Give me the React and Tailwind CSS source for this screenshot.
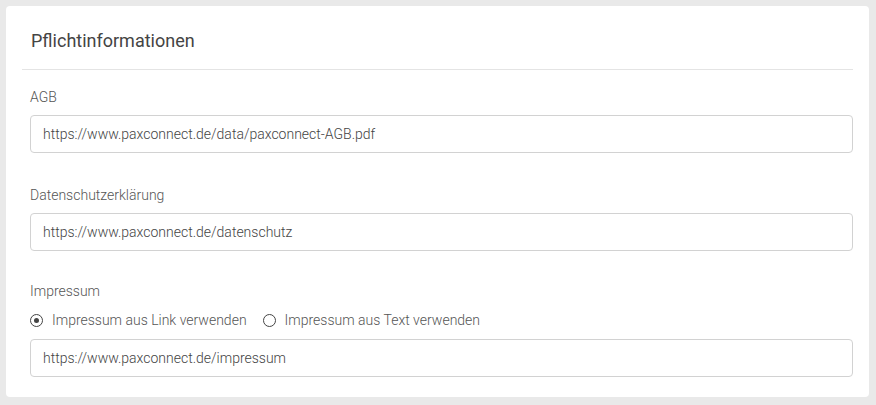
// App.jsx — Pflichtinformationen settings card
function Field({ label, value, className = "" }) {
  return (
    <div className={`flex flex-col ${className}`}>
      <label className="text-[14px] font-light leading-5 text-[#555]">{label}</label>
      <input
        readOnly
        value={value}
        className="mt-2 h-[38px] w-full rounded-[4px] border border-[#d2d2d2] bg-white px-3 text-[14px] font-light text-[#444] outline-none"
      />
    </div>
  );
}

function Radio({ checked, label }) {
  return (
    <label className="flex items-center gap-[9px] text-[14px] font-light leading-5 text-[#555]">
      <span className="flex h-[13px] w-[13px] items-center justify-center rounded-full border-[1.5px] border-[#444]">
        {checked && <span className="h-[5px] w-[5px] rounded-full bg-[#444]" />}
      </span>
      {label}
    </label>
  );
}

export default function App() {
  return (
    <div className="h-[405px] w-[876px] bg-[#e9e9e9] pt-[6px] pl-[6px] pr-[7px] font-['Roboto',sans-serif]">
      <div className="h-[391px] rounded-[4px] bg-white px-4">
        {/* Header */}
        <div className="flex h-[64px] items-center border-b border-[#e4e4e4] pl-[9px] pt-[6px]">
          <h2 className="text-[18px] leading-6 text-[#444]">Pflichtinformationen</h2>
        </div>

        {/* Body */}
        <div className="pl-2 pt-[17px]">
          <Field label="AGB" value="https://www.paxconnect.de/data/paxconnect-AGB.pdf" />
          <Field
            className="mt-[32px]"
            label="Datenschutzerklärung"
            value="https://www.paxconnect.de/datenschutz"
          />

          <div className="mt-[30px] flex flex-col">
            <span className="text-[14px] font-light leading-5 text-[#555]">Impressum</span>
            <div className="mt-[9px] flex items-center gap-4">
              <Radio checked label="Impressum aus Link verwenden" />
              <Radio label="Impressum aus Text verwenden" />
            </div>
            <input
              readOnly
              value="https://www.paxconnect.de/impressum"
              className="mt-[9px] h-[38px] w-full rounded-[4px] border border-[#d2d2d2] bg-white px-3 text-[14px] font-light text-[#444] outline-none"
            />
          </div>
        </div>
      </div>
    </div>
  );
}
